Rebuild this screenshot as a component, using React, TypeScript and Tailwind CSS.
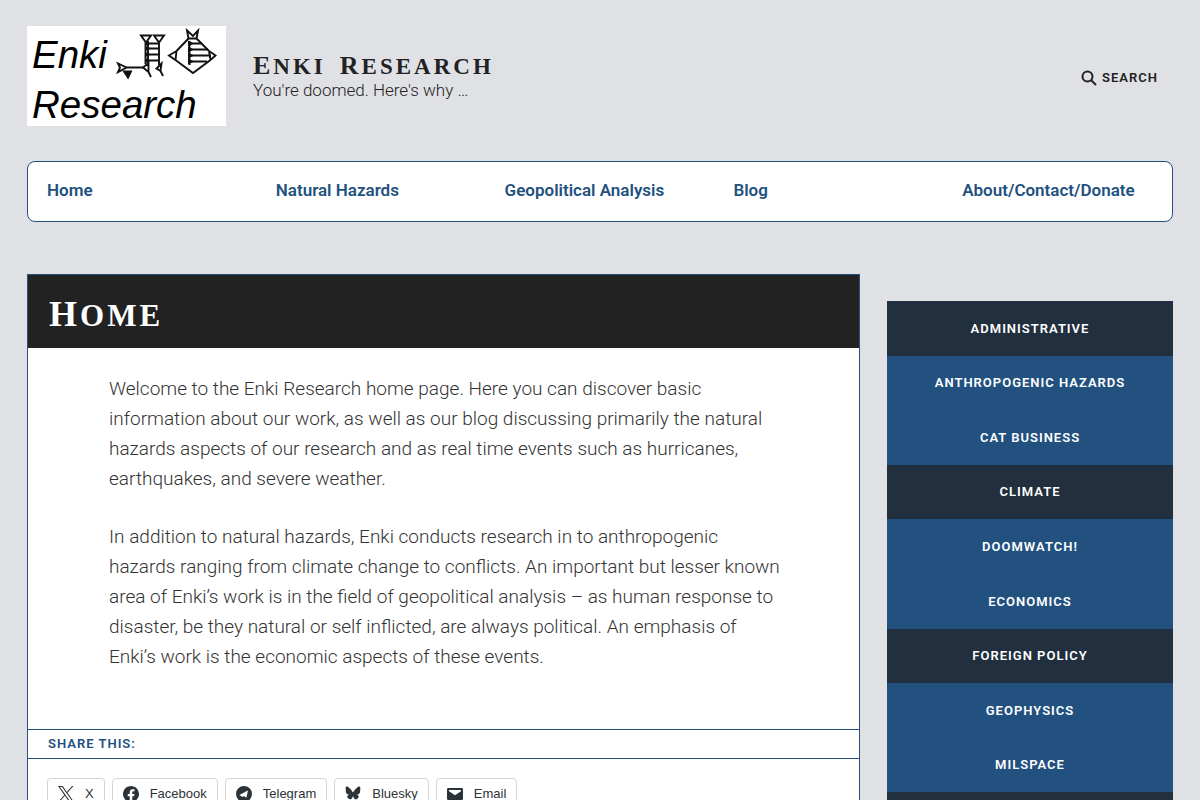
const navLinks = ['Home', 'Natural Hazards', 'Geopolitical Analysis', 'Blog', 'About/Contact/Donate']

const categories = [
  'Administrative',
  'Anthropogenic Hazards',
  'Cat Business',
  'Climate',
  'Doomwatch!',
  'Economics',
  'Foreign Policy',
  'Geophysics',
  'Milspace',
  'Modeling',
]

const shareLinks = [
  {
    name: 'X',
    path: 'M14.258 10.152 23.176 0h-2.113l-7.747 8.813L7.133 0H0l9.352 13.328L0 23.973h2.113l8.176-9.309 6.531 9.309h7.133zm-2.895 3.293-.949-1.328L2.875 1.56h3.246l6.086 8.523.945 1.328 7.91 11.078h-3.246z',
  },
  {
    name: 'Facebook',
    path: 'M12 0C5.4 0 0 5.4 0 12c0 6 4.4 11 10.1 11.9v-8.4h-3V12h3V9.4c0-3 1.8-4.7 4.5-4.7 1.3 0 2.7.2 2.7.2v3h-1.5c-1.5 0-1.9.9-1.9 1.9V12h3.3l-.5 3.5h-2.8v8.4C19.6 23 24 18 24 12 24 5.4 18.6 0 12 0z',
  },
  {
    name: 'Telegram',
    path: 'M12 0a12 12 0 1 0 0 24 12 12 0 0 0 0-24zm5.9 7.2-2 9.4c-.1.7-.5.8-1.1.5l-3-2.2-1.5 1.4c-.2.2-.3.3-.6.3l-4-2.6c-.7-.2-.7-.6.1-1l11.2-5.7c.5-.2 1 .1.9.9z',
  },
  {
    name: 'Bluesky',
    path: 'M5.8 2.2C8.3 4.1 11 7.9 12 9.9c1-2 3.7-5.8 6.2-7.7C20 .9 23-.2 23 3.2c0 .7-.4 5.7-.6 6.5-.8 2.8-3.6 3.5-6.1 3.1 4.4.7 5.5 3.2 3.1 5.7-4.6 4.7-6.6-1.2-7.1-2.7-.1-.3-.1-.4-.3-.4s-.2.1-.3.4c-.5 1.5-2.5 7.4-7.1 2.7-2.4-2.5-1.3-5 3.1-5.7-2.5.4-5.3-.3-6.1-3.1C1.4 8.9 1 3.9 1 3.2 1-.2 4 .9 5.8 2.2z',
  },
  {
    name: 'Email',
    path: 'M2 3h20a2 2 0 0 1 2 2v14a2 2 0 0 1-2 2H2a2 2 0 0 1-2-2V5a2 2 0 0 1 2-2zm1 3v2l9 6 9-6V6z',
  },
]

function Logo() {
  return (
    <svg width="199" height="100" viewBox="0 0 199 100" role="img" aria-label="Enki Research logo">
      <rect width="199" height="100" fill="#fff" />
      <g fontFamily="'Liberation Sans', Arial, sans-serif" fontStyle="italic" fontSize="38.5">
        <text x="5" y="42">Enki</text>
        <text x="5" y="92">Research</text>
      </g>
      {/* Cuneiform signs */}
      <g fill="none" stroke="#111" strokeWidth="1.9">
        <path d="M91 37.5 93 41.5 91 46 99.5 41.5zM99.5 41.5H116" />
        <path d="M97 45.5h7l-3 6z" fill="#111" />
        <path d="M114 9.5h10l-5 7zM127 9.5h10l-5 7zM118.5 16v22M121 15v23M132 16v23" />
        <path d="M119 17.5h13M119 22.5h13M119 28.5h13M119 34.5h13" />
        <path d="M121.500 37 116 41.5l5.5 4.5zM121 45l3 6M134.5 37.5l-5 5 4 2.5zM133 44l3 6" />
        <path d="M142 29.5 149.5 25l-1 9zM188.5 29.5 182 25l1.5 9zM149.5 25l12-12.5M169.5 12.5 182 25M148.5 34 166 47l17.5-13" />
        <path d="M160 4.5l1.5 8h8l1.5-8-5 5.5z" />
        <path d="M162.5 15v24M163 17.5h12M163 23.5h18M163 29.5h21M163 35.5h17" />
      </g>
      <g fill="#111">
        <path d="M161 14.500v6l6-3zM161 20.5v6l6-3zM161 26.5v6l6-3zM161 32.5v6l6-3z" />
        <path d="M118 15v5l6-2.5zM118 20v5l6-2.5zM118 26v5l6-2.5zM118 32v5l6-2.5z" />
      </g>
    </svg>
  )
}

export default function App() {
  return (
    <div className="min-h-screen bg-[#e0e1e5] px-[27px] pt-[26px] font-['Roboto',sans-serif] text-[#222]">
      <header className="flex items-center">
        <a href="#"><Logo /></a>
        <div className="ml-[27px] flex-1">
          <a
            href="#"
            className="flex gap-[14px] font-['Liberation_Serif',serif] text-[23px] leading-[27px] font-bold tracking-[3px] uppercase"
          >
            <span className="block first-letter:text-[26px]">Enki</span>
            <span className="block first-letter:text-[26px]">Research</span>
          </a>
          <p className="text-[17px] leading-5 font-light">You're doomed. Here's why …</p>
        </div>
        <button className="mr-[15px] flex items-center gap-[5px] pt-1 text-[13px] font-semibold tracking-[1px] uppercase">
          <svg className="h-4 w-4" viewBox="0 0 16 16" fill="none" stroke="currentColor" strokeWidth="2">
            <circle cx="6.5" cy="6.5" r="5" />
            <path d="m10 10 5 5" />
          </svg>
          Search
        </button>
      </header>

      <nav className="mt-[35px] grid grid-cols-5 rounded-lg border border-[#225180] bg-white pt-[15px] pb-[17px] text-[17px] leading-[27px] font-semibold text-[#225180]">
        {navLinks.map(link => (
          <a key={link} href="#" className="pl-[19px] whitespace-nowrap">{link}</a>
        ))}
      </nav>

      <div className="mt-[52px] flex items-start gap-[27px]">
        <main className="flex-1 border border-[#225180] bg-white">
          <h1 className="bg-[#222] px-[21px] pt-[19px] pb-3 font-['Liberation_Serif',serif] text-[31px] leading-[41px] font-bold tracking-[3px] text-white uppercase first-letter:text-[36px]">
            Home
          </h1>
          <div className="pt-[26px] pr-[74px] pb-[57px] pl-[81px] text-[19px] leading-[30px] font-light text-[#333]">
            <p className="mb-7">
              Welcome to the Enki Research home page. Here you can discover basic information about our work, as well
              as our blog discussing primarily the natural hazards aspects of our research and as real time events such
              as hurricanes, earthquakes, and severe weather.
            </p>
            <p>
              In addition to natural hazards, Enki conducts research in to anthropogenic hazards ranging from climate
              change to conflicts. An important but lesser known area of Enki’s work is in the field of geopolitical
              analysis – as human response to disaster, be they natural or self inflicted, are always political. An
              emphasis of Enki’s work is the economic aspects of these events.
            </p>
          </div>

          <h3 className="border-y border-[#225180] px-[20px] text-[13px] leading-7 font-semibold tracking-[1px] text-[#225180] uppercase">
            Share this:
          </h3>
          <ul className="flex gap-[7px] px-[19px] py-[19px] font-['Liberation_Sans',Arial,sans-serif] text-[13px]">
            {shareLinks.map(({ name, path }) => (
              <li key={name}>
                <a
                  href="#"
                  className="flex h-8 items-center gap-[11px] rounded-sm border border-[#d5d5d5] px-[10px] text-[#2c3338]"
                >
                  <svg className="h-4 w-4" viewBox="0 0 24 24" fill="currentColor">
                    <path fillRule="evenodd" d={path} />
                  </svg>
                  {name}
                </a>
              </li>
            ))}
          </ul>
        </main>

        <aside className="mt-[27px] w-1/4 max-w-[286px]">
          <ul className="grid min-h-[546px] auto-rows-fr text-center text-[13px] font-semibold tracking-[1px] text-white uppercase">
            {categories.map(category => (
              <li key={category} className="bg-[#225180] nth-[3n+1]:bg-[#212f3e]">
                <a href="#" className="flex h-full items-center justify-center">{category}</a>
              </li>
            ))}
          </ul>
        </aside>
      </div>
    </div>
  )
}
